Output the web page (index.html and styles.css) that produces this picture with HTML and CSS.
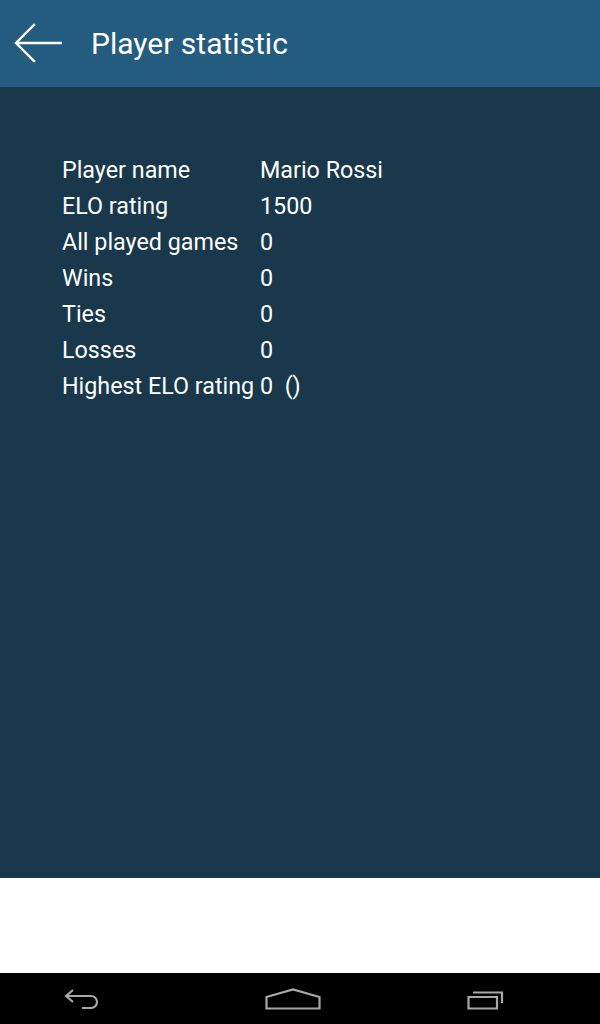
FILE: index.html
```html
<!DOCTYPE html>
<html>
<head>
<meta charset="utf-8">
<link rel="stylesheet" href="styles.css">
</head>
<body>
<div class="screen">
  <header class="appbar">
    <svg class="back" width="48" height="42" viewBox="0 0 48 42">
      <path d="M47 20H3M20 2L2 20L20 38" fill="none" stroke="#fff" stroke-width="2.4" stroke-linecap="square"/>
    </svg>
    <h1 class="title">Player statistic</h1>
  </header>
  <main class="content">
    <div class="stats">
      <div class="label">Player name</div><div class="value">Mario Rossi</div>
      <div class="label">ELO rating</div><div class="value">1500</div>
      <div class="label">All played games</div><div class="value">0</div>
      <div class="label">Wins</div><div class="value">0</div>
      <div class="label">Ties</div><div class="value">0</div>
      <div class="label">Losses</div><div class="value">0</div>
      <div class="label">Highest ELO rating</div><div class="value">0&nbsp;&nbsp;()</div>
    </div>
  </main>
  <div class="blank"></div>
  <nav class="navbar">
    <svg class="nav-back" width="36" height="22" viewBox="0 0 36 22">
      <path d="M9 2L2 8L9 14M2 8H27a6 6 0 0 1 0 12H18" fill="none" stroke="#a8a8a8" stroke-width="2.2"/>
    </svg>
    <svg class="nav-home" width="56" height="22" viewBox="0 0 56 22">
      <path d="M1.5 20.5V9L28 1.5L54.5 9V20.5Z" fill="none" stroke="#a8a8a8" stroke-width="2.2" stroke-linejoin="miter"/>
    </svg>
    <svg class="nav-recent" width="38" height="22" viewBox="0 0 38 22">
      <path d="M1.5 9H30V20.5H1.5Z" fill="none" stroke="#a8a8a8" stroke-width="2.2"/>
      <path d="M6 4.5H35V15" fill="none" stroke="#a8a8a8" stroke-width="2.2"/>
    </svg>
  </nav>
</div>
</body>
</html>
```
FILE: styles.css
```css
* { box-sizing: border-box; }
html, body { margin: 0; padding: 0; }
body { font-family: Roboto, "Liberation Sans", sans-serif; }
.screen { width: 600px; height: 1024px; display: flex; flex-direction: column; }
.appbar { height: 87px; background: #235c7f; display: flex; align-items: center; padding-left: 14px; flex-shrink: 0; }
.back { display: block; margin-top: 0; }
.title { margin: 0 0 0 29px; color: #fff; font-weight: 400; font-size: 30px; letter-spacing: 0; }
.content { height: 791px; background: #19384b; padding: 65px 0 0 62px; flex-shrink: 0; }
.stats { display: grid; grid-template-columns: 198px auto; grid-auto-rows: 36px; color: #fff; font-size: 23.3px; line-height: 36px; justify-content: start; }
.label, .value { white-space: nowrap; }
.blank { height: 95px; background: #fff; flex-shrink: 0; }
.navbar { height: 51px; background: #000; display: flex; align-items: center; padding-top: 0; flex-shrink: 0; position: relative; }
.nav-back { margin-left: 64px; }
.nav-home { margin-left: 165px; }
.nav-recent { margin-left: 146px; }
```
